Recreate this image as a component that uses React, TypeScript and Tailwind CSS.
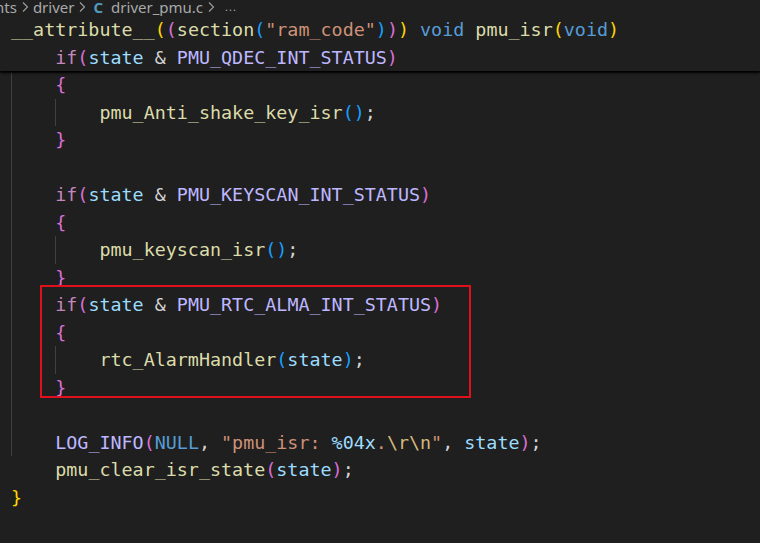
import React from "react";

const C = {
  fn: "text-[#DCDCAA]",
  kw: "text-[#569CD6]",
  ctrl: "text-[#C586C0]",
  v: "text-[#9CDCFE]",
  op: "text-[#D4D4D4]",
  mac: "text-[#BEB7FF]",
  str: "text-[#CE9178]",
  esc: "text-[#D7BA7D]",
  b1: "text-[#FFD700]",
  b2: "text-[#DA70D6]",
  b3: "text-[#179FFF]",
};

type Tok = [string, string];

const S = (c: string, t: string): Tok => [c, t];

const lines: { indent: number; toks: Tok[]; guide?: boolean }[] = [
  {
    indent: 0,
    toks: [
      S(C.fn, "__attribute__"),
      S(C.b1, "("),
      S(C.b2, "("),
      S(C.fn, "section"),
      S(C.b3, "("),
      S(C.str, '"ram_code"'),
      S(C.b3, ")"),
      S(C.b2, ")"),
      S(C.b1, ")"),
      S(C.op, " "),
      S(C.kw, "void"),
      S(C.op, " "),
      S(C.fn, "pmu_isr"),
      S(C.b1, "("),
      S(C.kw, "void"),
      S(C.b1, ")"),
    ],
  },
  {
    indent: 4,
    toks: [
      S(C.ctrl, "if"),
      S(C.b2, "("),
      S(C.v, "state"),
      S(C.op, " & "),
      S(C.mac, "PMU_QDEC_INT_STATUS"),
      S(C.b2, ")"),
    ],
  },
  { indent: 4, toks: [S(C.b2, "{")] },
  {
    indent: 8,
    guide: true,
    toks: [S(C.fn, "pmu_Anti_shake_key_isr"), S(C.b3, "()"), S(C.op, ";")],
  },
  { indent: 4, toks: [S(C.b2, "}")] },
  { indent: 0, toks: [] },
  {
    indent: 4,
    toks: [
      S(C.ctrl, "if"),
      S(C.b2, "("),
      S(C.v, "state"),
      S(C.op, " & "),
      S(C.mac, "PMU_KEYSCAN_INT_STATUS"),
      S(C.b2, ")"),
    ],
  },
  { indent: 4, toks: [S(C.b2, "{")] },
  {
    indent: 8,
    guide: true,
    toks: [S(C.fn, "pmu_keyscan_isr"), S(C.b3, "()"), S(C.op, ";")],
  },
  { indent: 4, toks: [S(C.b2, "}")] },
  {
    indent: 4,
    toks: [
      S(C.ctrl, "if"),
      S(C.b2, "("),
      S(C.v, "state"),
      S(C.op, " & "),
      S(C.mac, "PMU_RTC_ALMA_INT_STATUS"),
      S(C.b2, ")"),
    ],
  },
  { indent: 4, toks: [S(C.b2, "{")] },
  {
    indent: 8,
    guide: true,
    toks: [
      S(C.fn, "rtc_AlarmHandler"),
      S(C.b3, "("),
      S(C.v, "state"),
      S(C.b3, ")"),
      S(C.op, ";"),
    ],
  },
  { indent: 4, toks: [S(C.b2, "}")] },
  { indent: 0, toks: [] },
  {
    indent: 4,
    toks: [
      S(C.mac, "LOG_INFO"),
      S(C.b2, "("),
      S(C.kw, "NULL"),
      S(C.op, ", "),
      S(C.str, '"pmu_isr: '),
      S(C.v, "%04x"),
      S(C.str, "."),
      S(C.esc, "\\r\\n"),
      S(C.str, '"'),
      S(C.op, ", "),
      S(C.v, "state"),
      S(C.b2, ")"),
      S(C.op, ";"),
    ],
  },
  {
    indent: 4,
    toks: [
      S(C.fn, "pmu_clear_isr_state"),
      S(C.b2, "("),
      S(C.v, "state"),
      S(C.b2, ")"),
      S(C.op, ";"),
    ],
  },
  { indent: 0, toks: [S(C.b1, "}")] },
];

const Chevron = () => (
  <svg width="8" height="12" viewBox="0 0 8 12" className="mx-[4px] shrink-0">
    <path d="M2 1.5 L6.5 6 L2 10.5" fill="none" stroke="#a0a0a0" strokeWidth="1.1" />
  </svg>
);

function CodeLine({ line }: { line: (typeof lines)[number] }) {
  return (
    <div className="relative h-[27.5px] whitespace-pre leading-[27.5px]">
      {line.guide && (
        <div className="absolute left-[44px] top-0 h-full w-px bg-[#404040]" />
      )}
      <span>{" ".repeat(line.indent)}</span>
      {line.toks.map((t, i) => (
        <span key={i} className={t[0]}>
          {t[1]}
        </span>
      ))}
    </div>
  );
}

export default function App() {
  return (
    <div className="relative h-[543px] w-[760px] overflow-hidden bg-[#1f1f1f]">
      {/* breadcrumb */}
      <div
        className="flex h-[16px] items-start overflow-hidden text-[15px] text-[#a9a9a9]"
        style={{ fontFamily: '"Noto Sans", "Open Sans", sans-serif' }}
      >
        <div className="-mt-[2px] flex items-center leading-[18px]">
          <span className="-ml-[5px]">nts</span>
          <Chevron />
          <span>driver</span>
          <Chevron />
          <span className="ml-[3px] mr-[8px] font-bold text-[#519aba]">C</span>
          <span>driver_pmu.c</span>
          <Chevron />
          <span className="ml-[6px] text-[11px] tracking-[1px]">...</span>
        </div>
      </div>

      <div
        className="text-[18.37px] text-[#D4D4D4]"
        style={{ fontFamily: '"DejaVu Sans Mono", "Liberation Mono", monospace' }}
      >
        {/* sticky header */}
        <div className="relative z-10 bg-[#1f1f1f] pl-[11px] shadow-[0_2px_2px_#000]">
          <CodeLine line={lines[0]} />
          <CodeLine line={lines[1]} />
        </div>
        {/* body */}
        <div className="relative mt-[0.25px] pl-[11px]">
          <div className="absolute left-[11px] top-0 h-[385px] w-px bg-[#404040]" />
          {lines.slice(2).map((l, i) => (
            <CodeLine key={i} line={l} />
          ))}
        </div>
      </div>

      {/* highlight box */}
      <div className="absolute left-[40px] top-[285px] h-[113px] w-[431px] border-[2.5px] border-[#e0101c]" />
    </div>
  );
}
